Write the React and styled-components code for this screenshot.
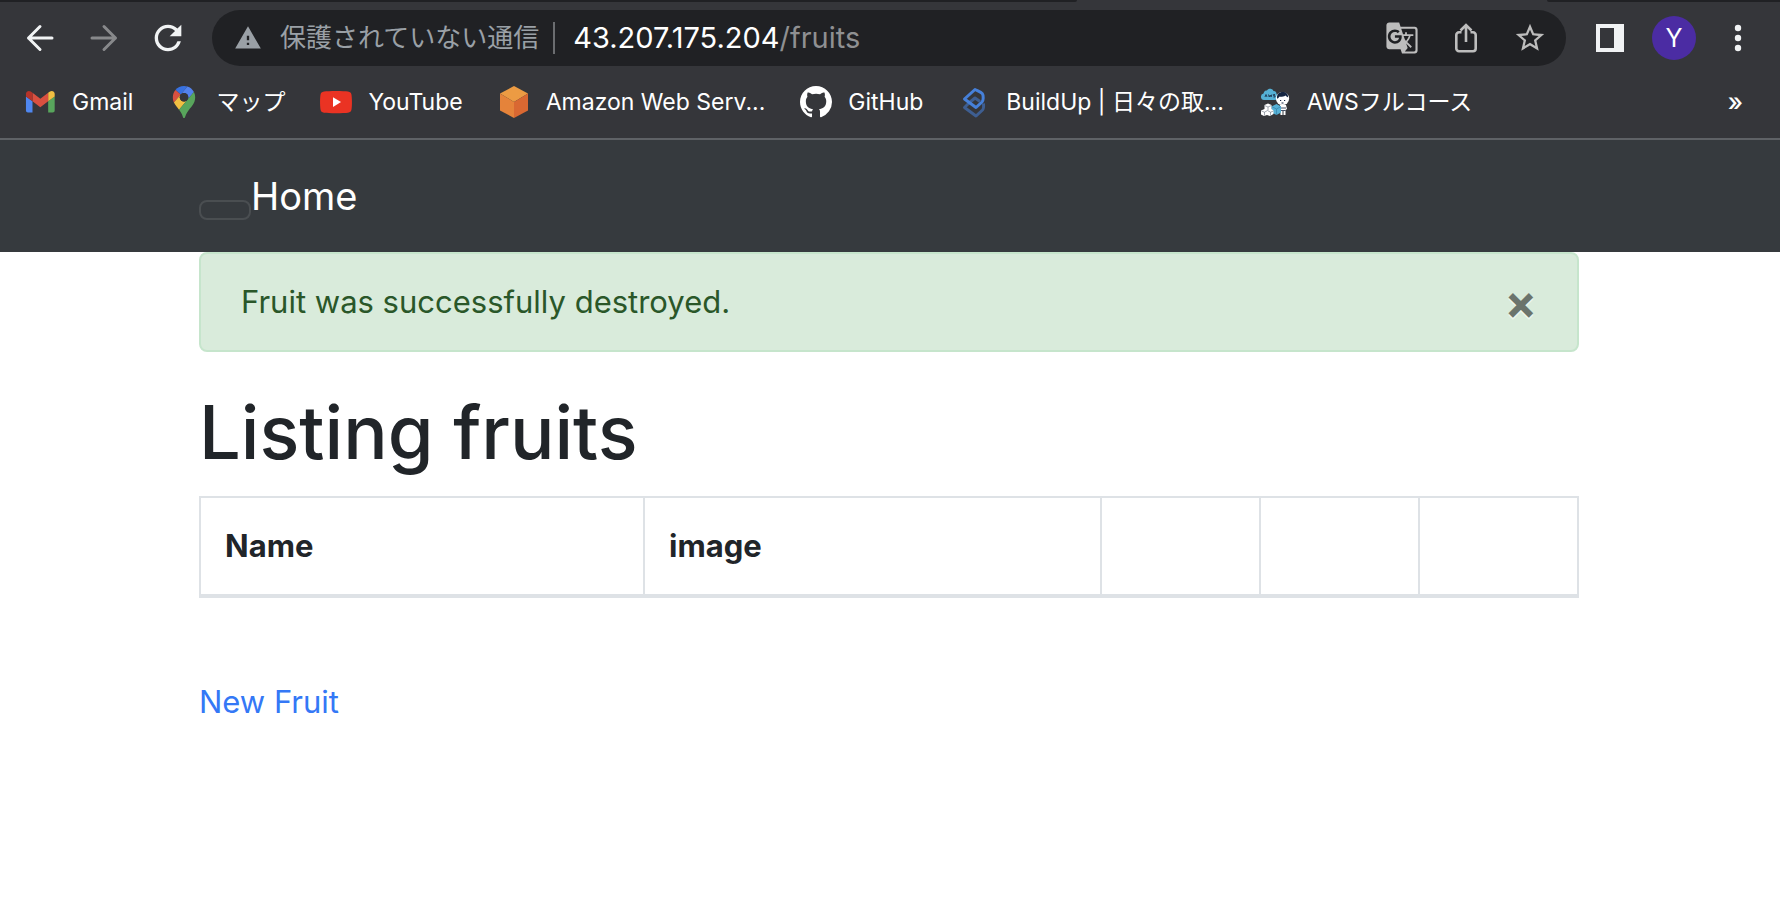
import React, { useState } from "react";
import styled, { createGlobalStyle } from "styled-components";
import { MdGTranslate, MdRefresh, MdStarBorder, MdWarning } from "react-icons/md";

const GlobalStyle = createGlobalStyle`
  *, *::before, *::after { box-sizing: border-box; }
  body {
    margin: 0;
    background: #fff;
    color: #212529;
    font-family: Inter, "Noto Sans CJK JP", sans-serif;
    font-size: 31px;
    line-height: 48px;
  }
  button { font-family: inherit; }
  svg { display: block; flex: none; }
`;

/* ---------- browser chrome ---------- */

const Chrome = styled.header`
  background: #35363a;
  border-bottom: 2px solid #5f6266;
`;

const TabStrip = styled.div`
  display: flex;
  height: 2px;
`;

const InactiveTabs = styled.div`
  flex: ${(p) => (p.$grow ? "1" : "0 0 233px")};
  background: #202124;
  border-radius: ${(p) => (p.$grow ? "0 0 2px 0" : "0 0 0 2px")};
`;

const ActiveTab = styled.div`
  flex: 0 0 470px;
`;

const Toolbar = styled.div`
  display: flex;
  align-items: center;
  gap: 22px;
  padding: 8px 20px 0 18px;
`;

const ButtonGroup = styled.div`
  display: flex;
  align-items: center;
  gap: 20px;
`;

const ToolButton = styled.button`
  display: flex;
  align-items: center;
  justify-content: center;
  width: 44px;
  height: 44px;
  padding: 0;
  border: 0;
  border-radius: 50%;
  background: ${(p) => p.$fill || "transparent"};
  color: ${(p) => p.$color || "#f1f3f4"};
  font-size: 25px;
  line-height: 44px;
`;

const AddressBar = styled.div`
  display: flex;
  align-items: center;
  flex: 1;
  min-width: 0;
  height: 56px;
  padding: 0 22px;
  border-radius: 28px;
  background: #202124;
  color: #9aa0a6;
  white-space: nowrap;
`;

const SecurityButton = styled.button`
  display: flex;
  align-items: center;
  gap: 18px;
  padding: 0 14px 0 0;
  border: 0;
  border-right: 2px solid #6b6d70;
  background: transparent;
  color: inherit;
  font-size: 26px;
  line-height: 32px;
`;

const Url = styled.div`
  flex: 1;
  min-width: 0;
  overflow: hidden;
  padding-left: 18px;
  color: #8f9092;
  font-size: 29px;
  line-height: 40px;
  outline: 0;
`;

const Host = styled.span`
  color: #fff;
`;

const AddressActions = styled.div`
  display: flex;
  align-items: center;
  gap: 36px;
`;

const AddressAction = styled.button`
  display: flex;
  align-items: center;
  justify-content: center;
  width: 28px;
  height: 34px;
  padding: 0;
  border: 0;
  background: transparent;
  color: #bdbdbd;
`;

const Bookmarks = styled.nav`
  display: flex;
  align-items: center;
  gap: 35px;
  height: 72px;
  padding: 0 37px 0 24px;
`;

const Bookmark = styled.a`
  display: flex;
  align-items: center;
  gap: 16px;
  color: #fff;
  font-size: 23px;
  line-height: 32px;
  text-decoration: none;
  white-space: nowrap;
`;

const MoreBookmarks = styled.button`
  margin-left: auto;
  padding: 0;
  border: 0;
  background: transparent;
  color: #fff;
  font-size: 25px;
  font-weight: 500;
  line-height: 32px;
`;

/* ---------- page ---------- */

const Container = styled.div`
  max-width: 1440px;
  margin: 0 auto;
  padding: 0 31px 0 29px;
`;

const Navbar = styled.nav`
  padding: 16px 0;
  background: #363a3e;
  font-size: 38px;
  line-height: 60px;
`;

const Toggler = styled.button`
  padding: 8px 24px;
  border: 2px solid rgba(255, 255, 255, 0.1);
  border-radius: 8px;
  background: transparent;
`;

const Brand = styled.a`
  display: inline-block;
  padding: 10px 0;
  color: #fff;
  text-decoration: none;
`;

const Alert = styled.div`
  display: flex;
  align-items: center;
  justify-content: space-between;
  margin-bottom: 32px;
  padding: 24px 40px;
  border: 2px solid #c6e5cc;
  border-radius: 8px;
  background: #d9ebdb;
  color: #2a5729;
`;

const CloseButton = styled.button`
  padding: 0;
  border: 0;
  background: transparent;
  color: #000;
  font-size: 48px;
  font-weight: 700;
  line-height: 48px;
  text-shadow: 0 2px 0 #fff;
  opacity: 0.5;
`;

const Title = styled.h1`
  margin: 0 0 16px;
  font-size: 74px;
  font-weight: 500;
  line-height: 96px;
`;

const Table = styled.table`
  width: 100%;
  margin-bottom: 80px;
  border-collapse: collapse;
  table-layout: fixed;
`;

const Column = styled.col`
  width: ${(p) => p.$width};
`;

const HeaderCell = styled.th`
  padding: 24px;
  border: 2px solid #dee2e6;
  border-bottom-width: 4px;
  font-weight: 700;
  text-align: left;
`;

const NewLink = styled.a`
  color: #3478f6;
  text-decoration: none;
`;

/* ---------- drawings ---------- */

const Arrow = ({ back }) => (
  <svg width="28" height="28" viewBox="0 0 28 28" fill="none" stroke="currentColor" strokeWidth="3" strokeLinecap="round" strokeLinejoin="round">
    <path d={back ? "M26 14H2.5M14 2.5L2.5 14 14 25.5" : "M2 14h23.5M14 2.5L25.5 14 14 25.5"} />
  </svg>
);

const ShareIcon = () => (
  <svg width="28" height="32" viewBox="0 0 28 32" fill="none" stroke="currentColor" strokeWidth="2.6">
    <path d="M9.5 10.3H7a2.7 2.7 0 0 0-2.7 2.7v13.5A2.7 2.7 0 0 0 7 29.2h14a2.7 2.7 0 0 0 2.7-2.7V13a2.7 2.7 0 0 0-2.7-2.7h-2.5" />
    <path d="M14 20V3.5M8.5 8.5L14 3l5.500 5.500" />
  </svg>
);

const SidePanelIcon = () => (
  <svg width="28" height="28" viewBox="0 0 28 28" fill="currentColor">
    <path fillRule="evenodd" d="M0 0h28v28H0zM4 4v20h14V4z" />
  </svg>
);

const DotsIcon = () => (
  <svg width="28" height="28" viewBox="0 0 28 28" fill="currentColor">
    <circle cx="14" cy="4" r="3.2" />
    <circle cx="14" cy="14" r="3.2" />
    <circle cx="14" cy="24" r="3.2" />
  </svg>
);

const GmailIcon = () => (
  <svg width="32" height="32" viewBox="46 27 98 98">
    <path fill="#4f87f0" d="M58 108h14V74L52 59v43c0 3.320 2.690 6 6 6" />
    <path fill="#58a55c" d="M120 108h14c3.320 0 6-2.690 6-6V59l-20 15" />
    <path fill="#f1bf42" d="M120 48v26l20-15v-8c0-7.420-8.470-11.650-14.400-7.200" />
    <path fill="#d95040" d="M72 74V48l24 18 24-18v26L96 92" />
    <path fill="#b5342a" d="M52 51v8l20 15V48l-5.600-4.200c-5.940-4.450-14.400-.22-14.400 7.200" />
  </svg>
);

const MapsIcon = () => (
  <svg width="32" height="32" viewBox="0 0 92.3 132.3">
    <path fill="#3871e0" d="M60.2 2.2C55.8.8 51 0 46.1 0 32 0 19.3 6.4 10.8 16.5l21.8 18.3L60.2 2.2z" />
    <path fill="#d95040" d="M10.8 16.5C4.1 24.5 0 34.9 0 46.1c0 8.7 1.7 15.7 4.6 22l28-33.3-21.8-18.3z" />
    <path fill="#5383ec" d="M46.2 28.5c9.8 0 17.7 7.9 17.7 17.7 0 4.3-1.6 8.3-4.2 11.4 0 0 13.9-16.6 27.5-32.7-5.6-10.8-15.3-19-27-22.7L32.6 34.8c3.3-3.8 8.1-6.3 13.6-6.3" />
    <path fill="#f1bf42" d="M46.2 63.8c-9.8 0-17.7-7.900-17.7-17.7 0-4.3 1.5-8.3 4.1-11.3l-28 33.3c4.8 10.6 12.8 19.2 21 29.9l34.1-40.500c-3.3 3.900-8.1 6.300-13.5 6.300" />
    <path fill="#58a55c" d="M59.1 109.200c15.4-24.1 33.3-35 33.3-63 0-7.700-1.900-14.900-5.200-21.300L25.6 98c2.6 3.4 5.3 7.3 7.9 11.300 9.400 14.500 6.800 23.100 12.800 23.100s3.400-8.700 12.800-23.200" />
    <circle cx="46.2" cy="46.2" r="17.7" fill="#35363a" />
  </svg>
);

const YouTubeIcon = () => (
  <svg width="32" height="32" viewBox="0 0 32 32">
    <path fill="#ea3323" d="M4 5.400C8 4.700 24 4.700 28 5.400c2.200.4 3.200 1.400 3.500 3.300.6 4 .6 11 0 14.900-.3 1.900-1.300 2.900-3.500 3.200-4 .6-20 .6-24 0-2.200-.3-3.200-1.300-3.500-3.200-.6-4-.6-11 0-14.900C.8 6.800 1.800 5.800 4 5.400z" />
    <path fill="#fff" d="M13 11.200v9.800l8-4.900z" />
  </svg>
);

const CubeIcon = () => (
  <svg width="32" height="32" viewBox="0 0 32 32">
    <path fill="#ec9b43" d="M16 0l14 7.500L16 16 2 7.500z" />
    <path fill="#e5833a" d="M2 7.500L16 16v16L2 24.500z" />
    <path fill="#d96832" d="M30 7.500L16 16v16l14-7.500z" />
  </svg>
);

const GitHubIcon = () => (
  <svg width="32" height="32" viewBox="0 0 16 16" fill="#fff">
    <path d="M8 0C3.580 0 0 3.580 0 8c0 3.540 2.290 6.530 5.470 7.590.4.070.55-.17.55-.38 0-.19-.01-.82-.01-1.490-2.010.37-2.530-.49-2.690-.94-.09-.23-.48-.94-.82-1.130-.28-.15-.68-.52-.01-.53.63-.01 1.080.58 1.230.82.72 1.210 1.870.87 2.330.66.070-.52.28-.87.51-1.070-1.780-.2-3.640-.89-3.640-3.950 0-.87.31-1.590.82-2.150-.08-.2-.36-1.020.08-2.120 0 0 .67-.21 2.200.82.64-.18 1.320-.27 2-.27.68 0 1.360.09 2 .27 1.530-1.040 2.200-.82 2.200-.82.44 1.100.16 1.920.08 2.120.51.56.82 1.270.82 2.150 0 3.070-1.870 3.750-3.650 3.950.29.25.54.73.54 1.480 0 1.070-.01 1.930-.01 2.200 0 .21.15.46.55.38A8.013 8.013 0 0 0 16 8c0-4.420-3.580-8-8-8z" />
  </svg>
);

const BuildUpIcon = () => (
  <svg width="32" height="32" viewBox="0 0 32 32" fill="none" stroke="#4680d9" strokeWidth="3" strokeLinejoin="round">
    <path opacity=".55" d="M11.500 16.500L6.500 21.500 18 30l6.500-6c1.200-1.200 1.300-3 1-6.500M11.500 16.500l5.500-4.500 5 3.500" />
    <path d="M17 3.500L6.500 13 18 21.500l6-5.500c1.500-1.500 1.600-6.500.3-8.300C22.800 5.700 20 5 17 3.500z" />
  </svg>
);

const CourseIcon = () => (
  <svg width="32" height="32" viewBox="0 0 32 32">
    <path fill="#55b0d5" d="M5 14a3.300 3.300 0 0 1-.5-6.500C5 5 6.500 4.500 8 4.500 9 2 13.500 2 14.500 5c2.500 0 3 1.500 3 3 2 1 1.500 6-1.500 6z" />
    <path d="M6 11l1-2.500 1 2.500M9.500 8.500l.7 2.500 1-2 .9 2 .7-2.500M16 8.500h-1.500v1.200H16V11h-1.600" fill="none" stroke="#1d3550" strokeWidth=".9" />
    <circle cx="23.500" cy="12.500" r="6.600" fill="#fff" />
    <path fill="#142440" d="M18 12.500c-.5-4.500 2.200-6.600 5.800-6.600 3.300 0 5.500 2 5.200 5.300-1.300-.2-1.700-1-2.500-1.700-2.300 1.500-4.500 1.200-6.500 1.200 0 1-.9 1.800-2 1.800z" />
    <path d="M21 14.500h1.200M25 14.500h1.200M22.500 17h2" stroke="#142440" strokeWidth="1" />
    <path fill="#fff" d="M21 19h6l1 4-1.500 1v5h-2v-4h-1v4h-2z" />
    <path d="M21 22h6M21.500 24.500h5" stroke="#142440" strokeWidth=".8" />
    <path fill="#55b0d5" d="M12.500 20.500l5-2.500 4.500 2.500v6L17.500 29l-5-2.500z" />
    <path d="M12.500 20.500l5 2.500 4.500-2.500M17.500 23v6" stroke="#3a86ad" strokeWidth=".8" fill="none" />
    <path fill="#fff" d="M5.500 19L9 17.500l3.500 1.500v4l2 1.500v3.500L11 30l-3-1-3 1-3-1.500v-4L5.500 23z" />
    <path d="M5.500 19.500L9 21l3.500-1.500M9 21v3M2.500 25l3 1.200 3-1.700 3 1.700 3-1.200M5.500 26v3.500M11.500 26v3.500" stroke="#7e8590" strokeWidth=".7" fill="none" />
  </svg>
);

const bookmarks = [
  { label: "Gmail", Icon: GmailIcon },
  { label: "マップ", Icon: MapsIcon },
  { label: "YouTube", Icon: YouTubeIcon },
  { label: "Amazon Web Serv...", Icon: CubeIcon },
  { label: "GitHub", Icon: GitHubIcon },
  { label: "BuildUp | 日々の取...", Icon: BuildUpIcon },
  { label: "AWSフルコース", Icon: CourseIcon },
];

const columns = [
  { label: "Name", width: "444px" },
  { label: "image", width: "auto" },
  { label: "", width: "159px" },
  { label: "", width: "159px" },
  { label: "", width: "159px" },
];

export default function App() {
  const [alertOpen, setAlertOpen] = useState(true);

  return (
    <>
      <GlobalStyle />
      <Chrome>
        <TabStrip>
          <InactiveTabs $grow />
          <ActiveTab />
          <InactiveTabs />
        </TabStrip>
        <Toolbar>
          <ButtonGroup>
            <ToolButton aria-label="Back"><Arrow back /></ToolButton>
            <ToolButton aria-label="Forward" $color="#88898b"><Arrow /></ToolButton>
            <ToolButton aria-label="Reload"><MdRefresh size={40} /></ToolButton>
          </ButtonGroup>
          <AddressBar>
            <SecurityButton>
              <MdWarning size={28} />
              保護されていない通信
            </SecurityButton>
            <Url role="textbox" aria-label="Address" contentEditable suppressContentEditableWarning spellCheck={false}>
              <Host>43.207.175.204</Host>/fruits
            </Url>
            <AddressActions>
              <AddressAction aria-label="Translate"><MdGTranslate size={34} /></AddressAction>
              <AddressAction aria-label="Share"><ShareIcon /></AddressAction>
              <AddressAction aria-label="Bookmark this page"><MdStarBorder size={34} /></AddressAction>
            </AddressActions>
          </AddressBar>
          <ButtonGroup>
            <ToolButton aria-label="Side panel"><SidePanelIcon /></ToolButton>
            <ToolButton $fill="#4b2ca3" $color="#fff">Y</ToolButton>
            <ToolButton aria-label="Menu"><DotsIcon /></ToolButton>
          </ButtonGroup>
        </Toolbar>
        <Bookmarks>
          {bookmarks.map(({ label, Icon }) => (
            <Bookmark key={label} href="#">
              <Icon />
              {label}
            </Bookmark>
          ))}
          <MoreBookmarks>»</MoreBookmarks>
        </Bookmarks>
      </Chrome>

      <Navbar>
        <Container>
          <Toggler aria-label="Toggle navigation" />
          <Brand href="#">Home</Brand>
        </Container>
      </Navbar>

      <Container as="main">
        {alertOpen && (
          <Alert role="alert">
            Fruit was successfully destroyed.
            <CloseButton aria-label="Close" onClick={() => setAlertOpen(false)}>×</CloseButton>
          </Alert>
        )}
        <Title>Listing fruits</Title>
        <Table>
          <colgroup>
            {columns.map((c, i) => <Column key={i} $width={c.width} />)}
          </colgroup>
          <thead>
            <tr>
              {columns.map((c, i) => <HeaderCell key={i} scope="col">{c.label}</HeaderCell>)}
            </tr>
          </thead>
        </Table>
        <NewLink href="#">New Fruit</NewLink>
      </Container>
    </>
  );
}
